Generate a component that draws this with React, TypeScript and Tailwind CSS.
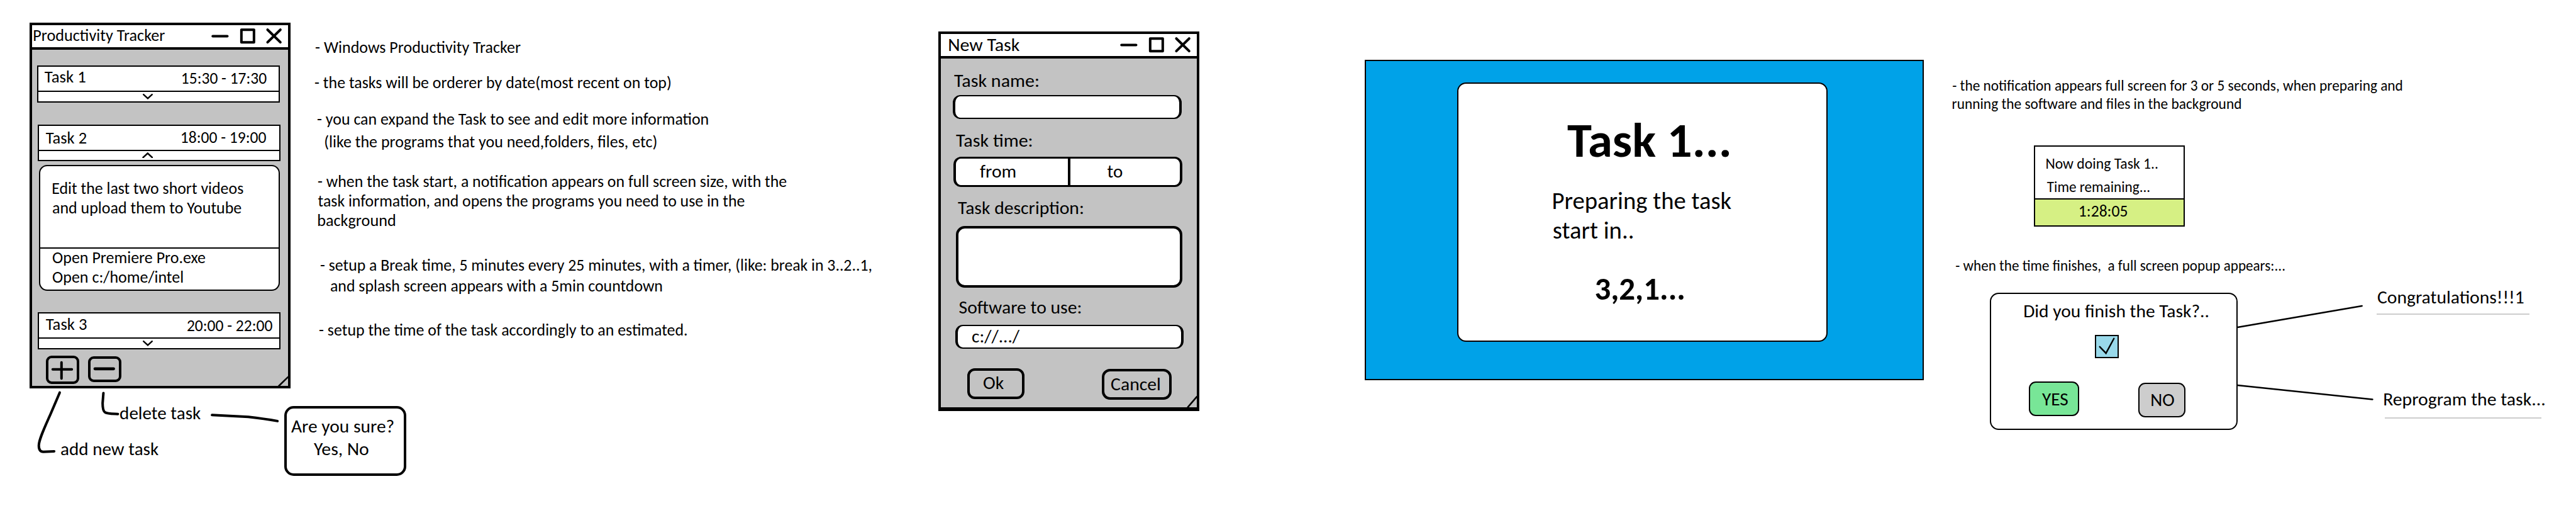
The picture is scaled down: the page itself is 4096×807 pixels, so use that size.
import { useLayoutEffect, useRef, useState } from "react";
import type { ReactNode } from "react";

/** One line of text whose ink is fitted to a given width, on a font-independent baseline. */
function Line({ w, className, children }: { w: number; className: string; children: string }) {
  const ref = useRef<HTMLSpanElement>(null);
  const [fit, setFit] = useState({ scale: 1, x: 0, y: 0 });

  useLayoutEffect(() => {
    const el = ref.current;
    const ctx = document.createElement("canvas").getContext("2d");
    if (!el || !ctx) return;
    const cs = getComputedStyle(el);
    const size = parseFloat(cs.fontSize);
    // Measured at ten times the size, since canvas metrics come back as whole pixels.
    ctx.font = `${cs.fontWeight} ${size * 10}px ${cs.fontFamily}`;
    const m = ctx.measureText(children);
    const left = m.actualBoundingBoxLeft / 10;
    const scale = w / (left + m.actualBoundingBoxRight / 10);
    const middle =
      (Math.round(m.fontBoundingBoxAscent / 10) - Math.round(m.fontBoundingBoxDescent / 10)) / 2;
    setFit({ scale, x: left * scale, y: Math.round(size * 0.35 - middle) + 0.4 });
  }, [children, w]);

  return (
    <div className={className} style={{ width: w }}>
      <span
        ref={ref}
        className="inline-block origin-left whitespace-pre"
        style={{ transform: `translate(${fit.x}px, ${fit.y}px) scaleX(${fit.scale})` }}
      >
        {children}
      </span>
    </div>
  );
}

const SM = "shrink-0 text-[25.6px] leading-[31px] h-[31px] ";
const MD = "shrink-0 text-[28.8px] leading-[34px] h-[34px] ";
const XS = "shrink-0 text-[23.5px] leading-[29px] h-[29px] ";

function WindowControls() {
  return (
    <svg
      className="h-[30.4px] w-[118.5px] shrink-0"
      viewBox="0 0 148 38"
      fill="none"
      stroke="#000"
      strokeWidth="5"
      strokeLinecap="round"
      strokeLinejoin="round"
    >
      <path d="M6.5 19.5H35.5" />
      <path d="M63.5 6.5H88.5V31.5H63.5Z" />
      <path d="M115.5 6.5L141 31.5M141 6.5L115.5 31.5" />
    </svg>
  );
}

function Chevron({ up, className }: { up?: boolean; className: string }) {
  return (
    <svg className={className} viewBox="0 0 20 11" fill="none" stroke="#000" strokeWidth="3" strokeLinecap="round">
      <path d={up ? "M1.5 9.5L10 1.8L18.5 9.5" : "M1.5 1.5L10 9.2L18.5 1.5"} />
    </svg>
  );
}

function TaskCard({ className, children, strip }: { className: string; children: ReactNode; strip: ReactNode }) {
  return (
    <div className={"w-[386px] shrink-0 border-2 border-black bg-white " + className}>
      <div className="flex h-10 items-start border-b-2 border-black">{children}</div>
      <div className="flex items-start">{strip}</div>
    </div>
  );
}

function TrackerWindow() {
  return (
    <div className="flex h-[581px] w-[415px] shrink-0 flex-col border-4 border-black bg-[#c3c3c3]">
      <div className="flex h-[39px] shrink-0 items-start justify-between border-b-4 border-black bg-white pr-[6.5px]">
        <Line w={208} className={SM + "ml-[3px] mt-[0.6px]"}>Productivity Tracker</Line>
        <div className="mt-[2.4px]"><WindowControls /></div>
      </div>
      <TaskCard className="ml-2 mt-[25px] h-[59px]" strip={<Chevron className="ml-[165.5px] mt-[3px] h-[8.8px] w-4" />}>
        <Line w={64.6} className={SM + "ml-[9.6px] mt-[1.3px]"}>Task 1</Line>
        <Line w={133.6} className={SM + "ml-auto mr-[19.2px] mt-[2.9px]"}>15:30 - 17:30</Line>
      </TaskCard>
      <TaskCard className="ml-[9px] mt-[35px] h-[58px]" strip={<Chevron up className="ml-[163.8px] mt-[1.8px] h-[9.4px] w-[17.6px]" />}>
        <Line w={64} className={SM + "ml-[10.9px] mt-[4.2px]"}>Task 2</Line>
        <Line w={134} className={SM + "ml-auto mr-[21.1px] mt-[3.4px]"}>18:00 - 19:00</Line>
      </TaskCard>
      <div className="ml-[11px] mt-[6px] h-[200px] w-[383px] shrink-0 rounded-[13px] border-2 border-black bg-white">
        <div className="flex h-[131px] flex-col border-b-2 border-black pl-[19.5px] pt-[20.2px]">
          <Line w={302.5} className={SM}>Edit the last two short videos</Line>
          <Line w={299.5} className={SM}>and upload them to Youtube</Line>
        </div>
        <div className="-mt-px flex flex-col pl-[19.8px]">
          <Line w={242.2} className={SM}>Open Premiere Pro.exe</Line>
          <Line w={206.4} className={SM}>Open c:/home/intel</Line>
        </div>
      </div>
      <TaskCard className="ml-[9px] mt-[34px] h-[59px]" strip={<Chevron className="ml-[165.3px] mt-[3.2px] h-[8.8px] w-4" />}>
        <Line w={64.5} className={SM + "ml-[10.5px] mt-[2.1px]"}>Task 3</Line>
        <Line w={134.8} className={SM + "ml-auto mr-[11.3px] mt-[3.7px]"}>20:00 - 22:00</Line>
      </TaskCard>
      <div className="ml-[22px] mt-[10px] flex items-start">
        <button className="h-[45px] w-[53px] rounded-[9px] border-4 border-black">
          <svg className="ml-[4px] h-[32px] w-[36px]" viewBox="0 0 45 40" stroke="#000" strokeWidth="5" strokeLinecap="round">
            <path d="M3.5 18.5H41.5M21 4.7V36.7" />
          </svg>
        </button>
        <button className="ml-[14px] mt-px h-[41px] w-[53px] rounded-[9px] border-4 border-black">
          <svg className="ml-[4px] h-[30px] w-[36px]" viewBox="0 0 45 38" stroke="#000" strokeWidth="6" strokeLinecap="round">
            <path d="M3.5 17.5H41" />
          </svg>
        </button>
      </div>
    </div>
  );
}

function Notes() {
  return (
    <div className="ml-[39px] flex flex-col items-start">
      <Line w={325.7} className={SM + "mt-[24px] ml-[0.7px]"}>- Windows Productivity Tracker</Line>
      <Line w={565} className={SM + "mt-[25px]"}>- the tasks will be orderer by date(most recent on top)</Line>
      <Line w={620.8} className={SM + "mt-[26.5px] ml-[4.2px]"}>- you can expand the Task to see and edit more information</Line>
      <Line w={526.5} className={SM + "mt-[5px] ml-[16.1px]"}>(like the programs that you need,folders, files, etc)</Line>
      <Line w={744.5} className={SM + "mt-[32px] ml-[4.8px]"}>- when the task start, a notification appears on full screen size, with the</Line>
      <Line w={677.6} className={SM + "mt-[0.5px] ml-[4.8px]"}>task information, and opens the programs you need to use in the</Line>
      <Line w={122} className={SM + "ml-[5.4px]"}>background</Line>
      <Line w={875.4} className={SM + "mt-[40px] ml-[9px]"}>- setup a Break time, 5 minutes every 25 minutes, with a timer, (like: break in 3..2..1,</Line>
      <Line w={526.5} className={SM + "mt-[1.6px] ml-[25px]"}>and splash screen appears with a 5min countdown</Line>
      <Line w={584} className={SM + "mt-[39.4px] ml-[7.2px]"}>- setup the time of the task accordingly to an estimated.</Line>
    </div>
  );
}

function NewTaskWindow() {
  return (
    <div className="mt-[50px] flex h-[603px] w-[415px] shrink-0 flex-col border-4 border-b-[6px] border-black bg-[#c3c3c3]">
      <div className="flex h-[39px] shrink-0 items-start justify-between border-b-4 border-black bg-white pr-[6.5px]">
        <Line w={112.4} className={MD + "ml-[13.1px]"}>New Task</Line>
        <div className="mt-[2px]"><WindowControls /></div>
      </div>
      <Line w={134.1} className={MD + "ml-[21.4px] mt-[18.2px]"}>Task name:</Line>
      <div className="ml-[19px] mt-[5.8px] h-[38px] w-[364px] shrink-0 rounded-[12px] border-x-4 border-y-2 border-black bg-white" />
      <Line w={120.7} className={MD + "ml-[23.7px] mt-[17.5px]"}>Task time:</Line>
      <div className="ml-5 mt-[8.5px] flex h-12 w-[364px] shrink-0 rounded-[12px] border-x-4 border-y-3 border-black bg-white">
        <div className="flex w-[182px] border-r-4 border-black pl-[38px] pt-[3.3px]">
          <Line w={56.7} className={MD}>from</Line>
        </div>
        <div className="flex pl-[59px] pt-[3.3px]">
          <Line w={23.5} className={MD}>to</Line>
        </div>
      </div>
      <Line w={199} className={MD + "ml-[26.6px] mt-[16.3px]"}>Task description:</Line>
      <div className="ml-6 mt-[11.7px] h-[98px] w-[360px] shrink-0 rounded-[14px] border-4 border-black bg-white" />
      <Line w={193.5} className={MD + "ml-[28.9px] mt-[13.7px]"}>Software to use:</Line>
      <div className="ml-[23px] mt-[11.3px] flex h-[38px] w-[363px] shrink-0 items-start rounded-[12px] border-x-4 border-y-2 border-black bg-white pl-[23.3px]">
        <Line w={75.2} className={MD + "-mt-px"}>c://.../</Line>
      </div>
      <div className="mt-[31px] flex items-start pl-[42px]">
        <button className="flex h-[49px] w-[91px] items-start rounded-[12px] border-4 border-black pl-[21.5px] pt-[2.3px]">
          <Line w={32.3} className={MD}>Ok</Line>
        </button>
        <button className="ml-[123px] mt-px flex h-[49px] w-[111px] items-start rounded-[13px] border-4 border-black pl-[11.1px] pt-[3.2px]">
          <Line w={77.2} className={MD}>Cancel</Line>
        </button>
      </div>
    </div>
  );
}

function SplashScreen() {
  return (
    <div className="ml-[263px] mt-[95px] h-[509px] w-[889px] shrink-0 border-2 border-black bg-[#00a2e8] pl-[145px] pt-[34px]">
      <div className="flex h-[412px] w-[589px] flex-col rounded-[14px] border-2 border-black bg-white">
        <Line w={257.9} className="ml-[172.5px] mt-[47.6px] h-[82px] shrink-0 text-[76.8px] font-bold leading-[82px]">Task 1...</Line>
        <Line w={283.2} className="ml-[151.4px] mt-[32.2px] h-[47px] shrink-0 text-[38.4px] leading-[47px]">Preparing the task</Line>
        <Line w={126} className="ml-[151px] h-[47px] shrink-0 text-[38.4px] leading-[47px]">start in..</Line>
        <Line w={140.4} className="ml-[218.3px] mt-[42.4px] h-[56px] shrink-0 text-[51.2px] font-bold leading-[56px]">3,2,1...</Line>
      </div>
    </div>
  );
}

function FinishDialog() {
  return (
    <div className="ml-[59px] flex h-[218px] w-[394px] shrink-0 flex-col rounded-[14px] border-2 border-black bg-white">
      <Line w={292.1} className={MD + "ml-[53.4px] mt-[10.4px]"}>Did you finish the Task?..</Line>
      <div className="ml-[165px] mt-[20.6px] h-[37px] w-[38px] shrink-0 border-2 border-black bg-[#99d9ea]">
        <svg className="h-[33px] w-[34px]" viewBox="0 0 42 41" fill="none" stroke="#000" strokeWidth="3" strokeLinecap="round">
          <path d="M7 21L19.3 33.7L35 4.7" />
        </svg>
      </div>
      <div className="mt-[37px] flex items-start pl-[60px]">
        <button className="flex h-[55px] w-20 items-start rounded-[11px] border-2 border-black bg-[#78e697] pl-[18.5px] pt-[8.7px]">
          <Line w={41.2} className={MD}>YES</Line>
        </button>
        <button className="ml-[94px] mt-[2px] flex h-[55px] w-[75px] items-start rounded-[11px] border-2 border-black bg-[#cdcdcd] pl-[18.8px] pt-[8.3px]">
          <Line w={36} className={MD}>NO</Line>
        </button>
      </div>
    </div>
  );
}

function Connectors() {
  return (
    <svg
      className="pointer-events-none absolute inset-0 h-[807px] w-[4096px]"
      viewBox="0 0 5116 1008"
      fill="none"
      stroke="#000"
      strokeLinecap="round"
      strokeLinejoin="round"
    >
      <g strokeWidth="5">
        <path d="M118.5 779L101 820C90 845 77 872 77 884Q77 896.5 86 896.5L107.5 895.5" />
        <path d="M205.3 780L203.7 800C203.7 822 208 820.5 234 821.5" />
        <path d="M421 823.5L493 827.3Q525 831 551 835.5" />
      </g>
      <g strokeWidth="3.2">
        <path d="M553.5 766L572 748" />
        <path d="M2359 808L2377 787" />
        <path d="M4443.5 649.5L4691 607" />
        <path d="M4443.5 764.5L4712 792.5" />
      </g>
    </svg>
  );
}

export default function App() {
  return (
    <div className="relative flex h-[807px] w-[4096px] items-start overflow-hidden bg-white font-['Carlito','Lato',sans-serif] text-black">
      <div className="w-[1492px] shrink-0 pl-[47px] pt-9">
        <div className="flex items-start">
          <TrackerWindow />
          <Notes />
        </div>
        <div className="flex items-start">
          <div className="w-[405px] shrink-0">
            <Line w={128.3} className={MD + "ml-[144.3px] mt-[22.4px]"}>delete task</Line>
            <Line w={155.2} className={MD + "ml-[50px] mt-[22.3px]"}>add new task</Line>
          </div>
          <div className="mt-[28px] flex h-[111px] w-[194px] shrink-0 flex-col rounded-[15px] border-4 border-black bg-white">
            <Line w={162.6} className={MD + "ml-[7.4px] mt-[10.7px]"}>Are you sure?</Line>
            <Line w={87} className={MD + "ml-[43.3px] mt-[2.5px]"}>Yes, No</Line>
          </div>
        </div>
      </div>
      <NewTaskWindow />
      <SplashScreen />
      <div className="ml-[46px] flex flex-col pt-[121.6px]">
        <Line w={714.2} className={XS}>- the notification appears full screen for 3 or 5 seconds, when preparing and</Line>
        <Line w={457.8} className={XS}>running the software and files in the background</Line>
        <div className="ml-[129px] mt-[51.4px] flex h-[129px] w-[240px] shrink-0 flex-col border-2 border-black">
          <div className="flex h-[84px] shrink-0 flex-col border-b-2 border-black">
            <Line w={176.5} className={XS + "ml-[18.4px] mt-[12.7px]"}>Now doing Task 1..</Line>
            <Line w={162.7} className={XS + "ml-[18.9px] mt-[7.9px]"}>Time remaining...</Line>
          </div>
          <div className="flex grow bg-[#d6f084]">
            <Line w={75} className={SM + "ml-[71.3px] mt-[3.3px]"}>1:28:05</Line>
          </div>
        </div>
        <Line w={522.5} className={XS + "ml-[4.8px] mt-[48px]"}>- when the time finishes,  a full screen popup appears:...</Line>
        <div className="mt-[28px] flex items-start">
          <FinishDialog />
          <div className="ml-[221px] flex flex-col">
            <Line w={231.6} className={MD + "-mt-[9.8px] ml-[1.5px]"}>Congratulations!!!1</Line>
            <div className="mt-[8.8px] h-[2.4px] w-[243px] bg-[#cdcdcd]" />
            <Line w={254.8} className={MD + "ml-[12.4px] mt-[117.1px]"}>Reprogram the task...</Line>
            <div className="ml-[13px] mt-[11.5px] h-[2.4px] w-[249px] bg-[#cdcdcd]" />
          </div>
        </div>
      </div>
      <Connectors />
    </div>
  );
}
